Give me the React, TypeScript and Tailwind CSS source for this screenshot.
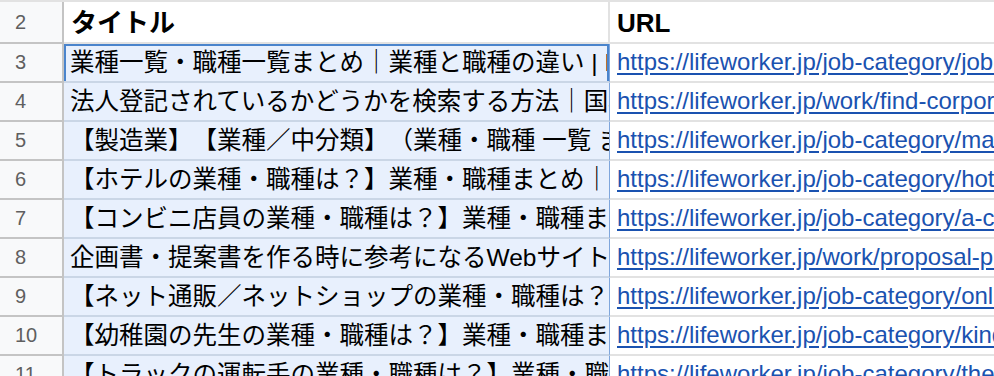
const rows = [
  {
    n: 3,
    title: "業種一覧・職種一覧まとめ｜業種と職種の違い | Lifeworker",
    url: "https://lifeworker.jp/job-category/job-list/",
  },
  {
    n: 4,
    title: "法人登記されているかどうかを検索する方法｜国税庁法人番号公表サイト",
    url: "https://lifeworker.jp/work/find-corporate-number/",
  },
  {
    n: 5,
    title: "【製造業】【業種／中分類】（業種・職種 一覧 まとめ）",
    url: "https://lifeworker.jp/job-category/manufacturing/",
  },
  {
    n: 6,
    title: "【ホテルの業種・職種は？】業種・職種まとめ｜ホテル業界",
    url: "https://lifeworker.jp/job-category/hotel/",
  },
  {
    n: 7,
    title: "【コンビニ店員の業種・職種は？】業種・職種まとめ",
    url: "https://lifeworker.jp/job-category/a-convenience-store/",
  },
  {
    n: 8,
    title: "企画書・提案書を作る時に参考になるWebサイト10選",
    url: "https://lifeworker.jp/work/proposal-planning/",
  },
  {
    n: 9,
    title: "【ネット通販／ネットショップの業種・職種は？】業種・職種まとめ",
    url: "https://lifeworker.jp/job-category/online-shop/",
  },
  {
    n: 10,
    title: "【幼稚園の先生の業種・職種は？】業種・職種まとめ",
    url: "https://lifeworker.jp/job-category/kindergarten-teacher/",
  },
  {
    n: 11,
    title: "【トラックの運転手の業種・職種は？】業種・職種まとめ",
    url: "https://lifeworker.jp/job-category/the-truck-driver/",
  },
];

export default function App() {
  return (
    <div className="h-[376px] w-[994px] overflow-hidden bg-white font-['Liberation_Sans','Noto_Sans_CJK_JP',sans-serif] [text-spacing-trim:space-all]">
      <div className="border-t-2 border-[#e2e2e2]">
        {/* header row */}
        <div className="flex h-[42px]">
          <div className="w-[64px] shrink-0 border-r-2 border-b-2 border-[#c4c4c4] bg-[#f8f9fa] pl-[15px] text-[20px] leading-[40px] text-[#5f5f5f]">
            2
          </div>
          <div className="w-[546px] shrink-0 overflow-hidden whitespace-nowrap border-r-2 border-b-2 border-[#e2e2e2] pl-[7px] pt-[2px] text-[26px] font-bold leading-[38px] text-black">
            タイトル
          </div>
          <div className="min-w-0 flex-1 overflow-hidden whitespace-nowrap border-b-2 border-[#e2e2e2] pl-[7px] pt-[2px] text-[26px] font-bold leading-[38px] text-black">
            URL
          </div>
        </div>

        {rows.map((r) => (
          <div key={r.n} className="flex h-[39px]">
            <div className="w-[64px] shrink-0 border-r-2 border-b-2 border-[#c4c4c4] bg-[#f8f9fa] pl-[15px] text-[20px] leading-[37px] text-[#5f5f5f]">
              {r.n}
            </div>
            <div className="relative w-[546px] shrink-0 overflow-hidden whitespace-nowrap border-r border-b-2 border-r-[#7fa6dc] border-b-[#cad6e6] bg-[#e8f0fd] pl-[6px] text-[24.5px] leading-[37px] text-black">
              {r.title}
              {r.n === 3 && (
                <div className="pointer-events-none absolute inset-x-0 top-0 -bottom-[2px] border-2 border-[#4a84cc]" />
              )}
            </div>
            <div className="min-w-0 flex-1 overflow-hidden whitespace-nowrap border-b-2 border-[#e2e2e2] pl-[7px] text-[24px] leading-[35px] text-[#1a52b0]">
              <span className="underline underline-offset-[3px]">{r.url}</span>
            </div>
          </div>
        ))}
      </div>
    </div>
  );
}
